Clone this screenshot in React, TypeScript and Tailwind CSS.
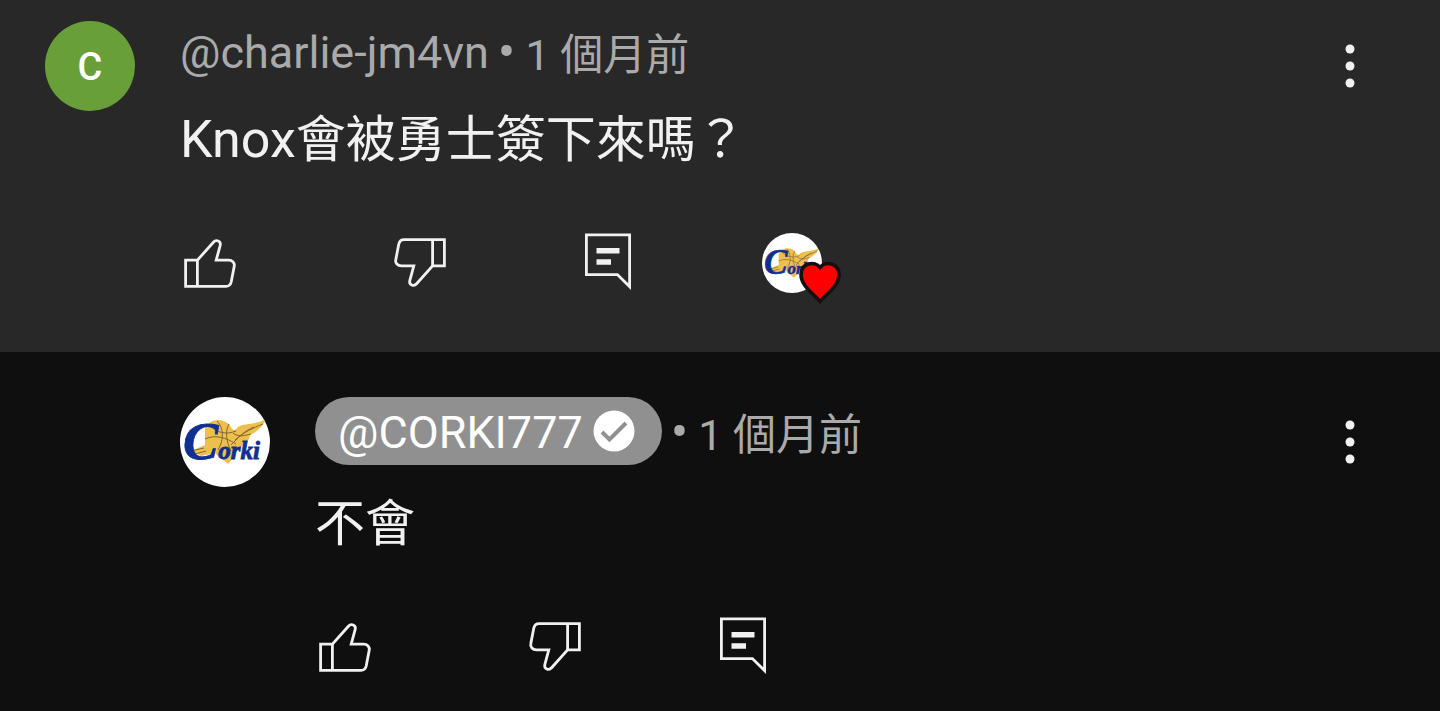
import type { ReactNode } from 'react'

function MoreButton() {
  return (
    <button type="button" aria-label="更多" className="flex size-[90px] shrink-0 items-center justify-center text-[#f1f1f1]">
      <svg viewBox="0 0 60 60" className="size-[60px]" fill="currentColor">
        <circle cx="30" cy="13" r="4.5" />
        <circle cx="30" cy="30" r="4.5" />
        <circle cx="30" cy="47" r="4.5" />
      </svg>
    </button>
  )
}

function ThumbIcon({ className = '' }: { className?: string }) {
  return (
    <svg viewBox="0 1 60 60" className={`size-[60px] ${className}`} fill="none" stroke="currentColor" strokeWidth="2.8">
      <path d="M5.6 28.2H17.4L33.4 10.2C36.2 7 41.2 9 40.2 13.4L36.2 28.2H48.5C52.4 28.2 55 30.8 54.2 34.4L51.2 50C50.4 53 48.6 54.4 46 54.4H5.6Z" />
      <path d="M17.4 28V54" />
    </svg>
  )
}

function ReplyIcon() {
  return (
    <svg viewBox="0 0 60 60" className="size-[60px]" fill="none" stroke="currentColor" strokeWidth="2.8">
      <path d="M6.4 1.9H49.6V53.6L37.4 41.6H6.4Z" />
      <path d="M16.5 17.8H39.5M16.5 29H31" strokeWidth="5.6" />
    </svg>
  )
}

function CorkiLogo({ className = '' }: { className?: string }) {
  return (
    <svg viewBox="0 0 90 90" className={`rounded-full bg-white ${className}`} role="img" aria-label="Corki">
      <path
        d="M25 32C28 22 44 19 51 30C53 34 55 34 58 30C65 26 76 28 86 22C82 31 76 35 70 38C69 45 64 49 58 51C56 58 52 63 48 67C43 62 38 60 35 56L21 59L11 54L25 48Z"
        fill="#edbf4d"
      />
      <path
        d="M37 24C44 31 44 43 38 53M29 28C37 36 46 38 56 34M25 42C35 37 47 41 56 47M49 27C45 34 46 44 51 54M53 36C58 40 63 39 71 37M55 43C64 35 73 31 83 27M51 48C58 41 64 34 74 30M11 54L24 51M15 57L26 54"
        fill="none"
        stroke="#80692f"
        strokeWidth="1"
      />
      <text
        x="3"
        y="62"
        fill="#102f93"
        stroke="#102f93"
        strokeWidth="0.8"
        fontFamily="Liberation Serif, serif"
        fontStyle="italic"
        fontWeight="700"
        fontSize="53"
      >
        C<tspan fontSize="25">orki</tspan>
      </text>
    </svg>
  )
}

function HeartedBy() {
  return (
    <button type="button" aria-label="Corki" className="relative ml-[122px] size-[60px]">
      <CorkiLogo className="size-[60px]" />
      <svg viewBox="0 0 46 46" className="absolute top-[27px] left-[35px] size-[46px]">
        <path
          d="M23 41.5C17 34 4 26 4 14.5C4 3.5 17.5 0 23 7.5C28.5 0 42 3.5 42 14.5C42 26 29 34 23 41.5Z"
          fill="#f00"
          stroke="#170e0e"
          strokeWidth="3.6"
        />
      </svg>
    </button>
  )
}

function Actions({ children }: { children?: ReactNode }) {
  return (
    <div className="mt-[63px] flex h-[60px] items-center text-[#f1f1f1]">
      <button type="button" aria-label="喜歡">
        <ThumbIcon />
      </button>
      <button type="button" aria-label="不喜歡" className="ml-[150px]">
        <ThumbIcon className="rotate-180" />
      </button>
      <button type="button" aria-label="回覆" className="ml-[130px]">
        <ReplyIcon />
      </button>
      {children}
    </div>
  )
}

function PostedAt() {
  return (
    <>
      <span className="mr-[10px] ml-[9px] text-[52px]">•</span>
      <span className="pt-[4px] text-[43px]">1 個月前</span>
    </>
  )
}

export default function App() {
  return (
    <main className="min-h-screen bg-[#0f0f0f] font-['Roboto','Noto_Sans_CJK_TC',sans-serif] text-[#f1f1f1]">
      <article className="flex bg-[#282828] px-[45px] pt-[21px] pb-[59px]">
        <div className="flex size-[90px] shrink-0 items-center justify-center rounded-full bg-[#689f38] pt-[2px] text-[38px] font-medium text-white">
          C
        </div>
        <div className="ml-[45px] min-w-0 flex-1">
          <div className="flex h-[64px] items-center text-[45px] leading-[60px] text-[#aaa]">
            <span>@charlie-jm4vn</span>
            <PostedAt />
          </div>
          <p className="mt-[25px] text-[50px] leading-[60px]">
            <span className="text-[52px]">Knox</span>會被勇士簽下來嗎？
          </p>
          <Actions>
            <HeartedBy />
          </Actions>
        </div>
        <MoreButton />
      </article>

      <article className="flex pt-[45px] pr-[45px] pl-[180px]">
        <CorkiLogo className="size-[90px] shrink-0" />
        <div className="ml-[45px] min-w-0 flex-1">
          <div className="flex h-[72px] items-center text-[45px] leading-[60px] text-[#aaa]">
            <a
              href="#corki"
              className="flex h-[68px] items-center self-start rounded-full bg-[#909090] pr-[27px] pl-[23px] text-white"
            >
              <span className="pt-[4px]">@CORKI777</span>
              <svg viewBox="0 0 42 42" className="ml-[10px] size-[42px]">
                <circle cx="21" cy="21" r="20.5" fill="#fff" />
                <path d="M9 22L16.5 29.5L33 13" fill="none" stroke="#909090" strokeWidth="4" />
              </svg>
            </a>
            <PostedAt />
          </div>
          <p className="mt-[25px] text-[50px] leading-[60px]">不會</p>
          <Actions />
        </div>
        <MoreButton />
      </article>
    </main>
  )
}
